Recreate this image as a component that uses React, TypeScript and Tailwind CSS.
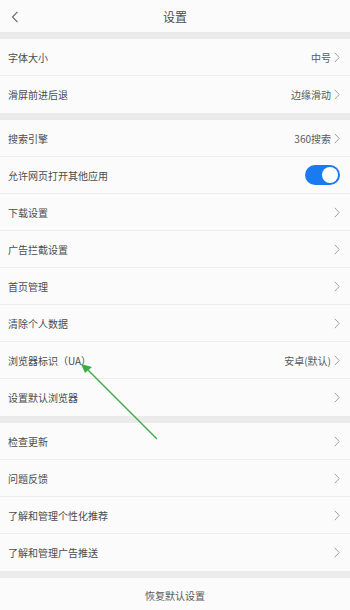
import type { ReactNode } from 'react';

type Row = { label: string; value?: string; toggle?: boolean };

const sections: Row[][] = [
  [
    { label: '字体大小', value: '中号' },
    { label: '滑屏前进后退', value: '边缘滑动' },
  ],
  [
    { label: '搜索引擎', value: '360搜索' },
    { label: '允许网页打开其他应用', toggle: true },
    { label: '下载设置' },
    { label: '广告拦截设置' },
    { label: '首页管理' },
    { label: '清除个人数据' },
    { label: '浏览器标识（UA）', value: '安卓(默认)' },
    { label: '设置默认浏览器' },
  ],
  [
    { label: '检查更新' },
    { label: '问题反馈' },
    { label: '了解和管理个性化推荐' },
    { label: '了解和管理广告推送' },
  ],
];

function Chevron() {
  return (
    <svg width="6" height="11" viewBox="0 0 6 11" className="shrink-0">
      <path d="M0.8 0.8 L5.2 5.5 L0.8 10.2" fill="none" stroke="#a0a0a0" strokeWidth="1" />
    </svg>
  );
}

function Toggle() {
  return (
    <div className="w-[35px] h-[20px] rounded-full bg-[#1a7af0] flex items-center justify-end pr-[2px]">
      <div className="w-[16px] h-[16px] rounded-full bg-white" />
    </div>
  );
}

function SettingRow({ row, last }: { row: Row; last: boolean }) {
  return (
    <div className={`h-[37px] flex items-center justify-between pl-[8px] pr-[10px] bg-[#fbfbfb] ${last ? '' : 'border-b border-[#ececec]'}`}>
      <span className="text-[10px] text-[#4c4c4c]">{row.label}</span>
      {row.toggle ? (
        <Toggle />
      ) : (
        <div className="flex items-center gap-[3px]">
          {row.value && <span className="text-[10px] text-[#5a5a5a]">{row.value}</span>}
          <Chevron />
        </div>
      )}
    </div>
  );
}

function Gap({ children }: { children?: ReactNode }) {
  return <div className="h-[7px] bg-[#ebebeb]">{children}</div>;
}

export default function App() {
  return (
    <div
      className="relative w-[350px] h-[610px] overflow-hidden bg-[#ebebeb]"
      style={{ fontFamily: '"Noto Sans CJK SC", "Noto Sans", sans-serif' }}
    >
      <div className="h-[32px] bg-[#fbfbfb] flex items-center relative pt-[1px]">
        <svg width="8" height="12" viewBox="0 0 8 12" className="absolute left-[11px] top-[11px]">
          <path d="M6.5 0.8 L1.5 6 L6.5 11.2" fill="none" stroke="#666" strokeWidth="1.1" />
        </svg>
        <span className="flex-1 text-center text-[12px] text-[#4c4c4c]">设置</span>
      </div>
      {sections.map((sec, i) => (
        <div key={i}>
          <Gap />
          {sec.map((r, j) => (
            <SettingRow key={r.label} row={r} last={j === sec.length - 1} />
          ))}
        </div>
      ))}
      <Gap />
      <div className="h-[40px] bg-[#fbfbfb] flex items-start justify-center pt-[10px]">
        <span className="text-[10px] text-[#5a5a5a]">恢复默认设置</span>
      </div>

      <svg className="absolute left-0 top-0 pointer-events-none" width="350" height="610" viewBox="0 0 350 610">
        <line x1="157" y1="439" x2="88" y2="370" stroke="#3dae45" strokeWidth="1.4" />
        <polygon points="81,364 92,367 85,373" fill="#3dae45" />
      </svg>
    </div>
  );
}
